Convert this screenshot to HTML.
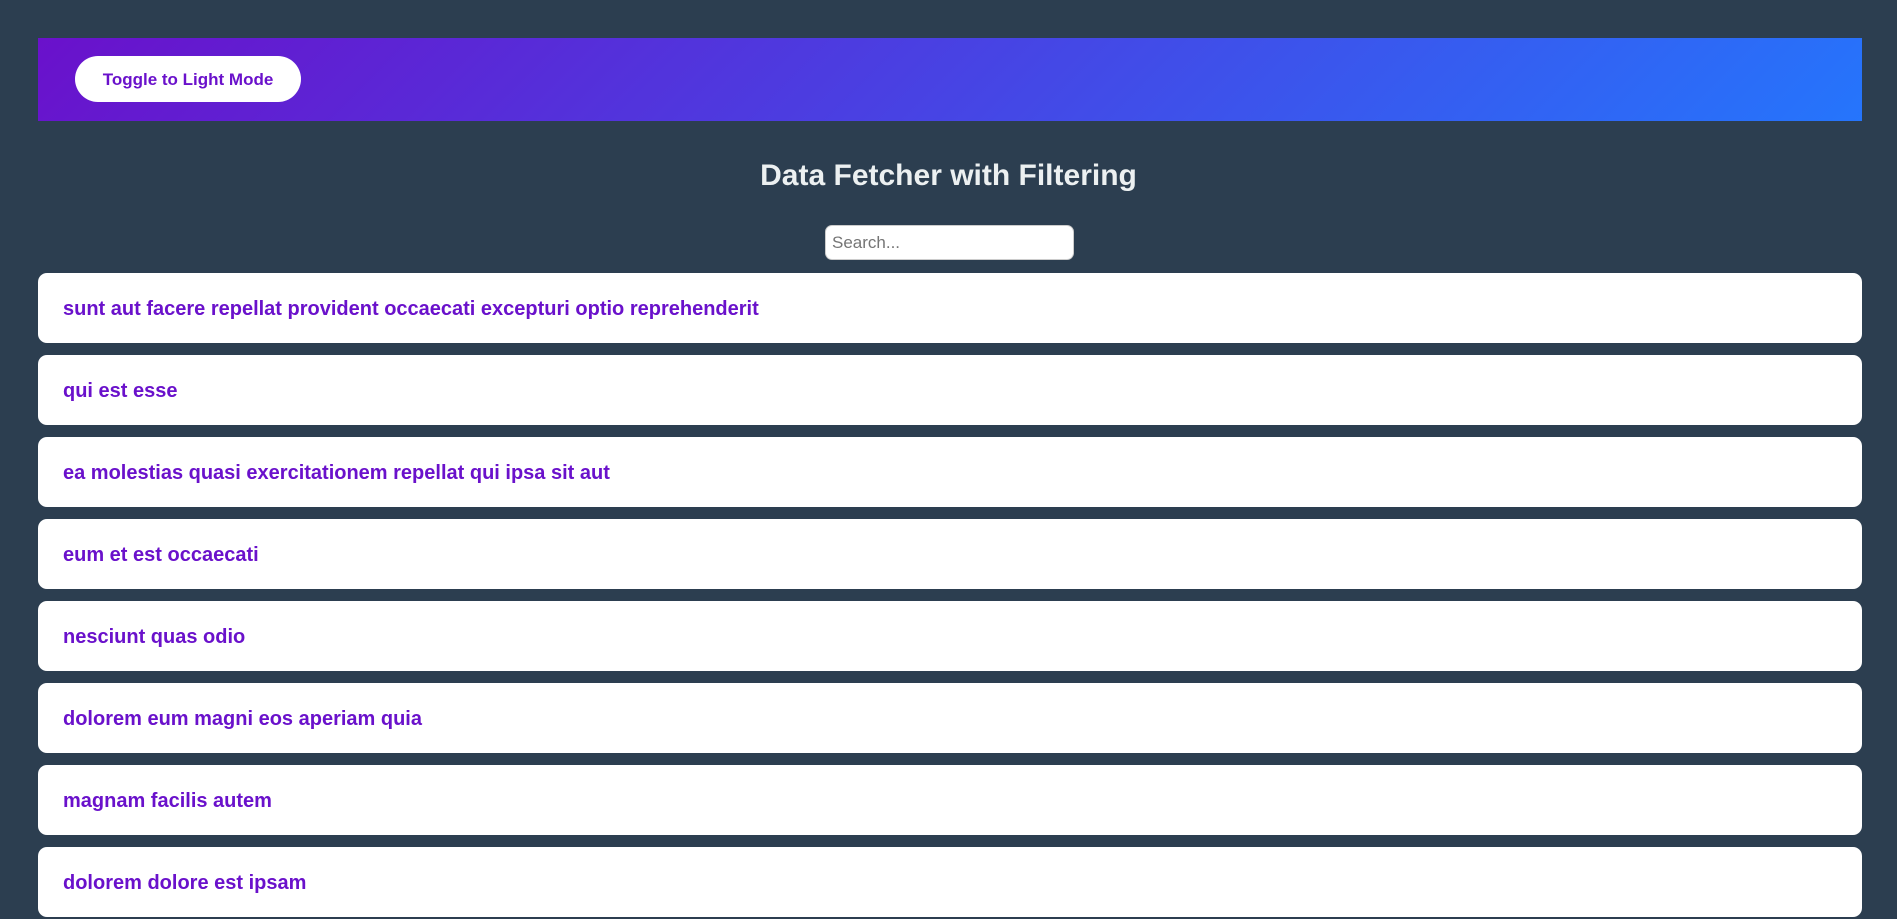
<!DOCTYPE html>
<html><head><style>
*{box-sizing:border-box}
body{margin:0;background:#2c3e50;font-family:"Liberation Sans",Arial,sans-serif;width:1897px;height:917px;overflow:hidden}
.hdr{position:absolute;left:38px;top:38px;width:1824px;height:83px;background:linear-gradient(135deg,#6a11cb,#2575fc)}
.btn{position:absolute;left:37px;top:18px;width:226px;height:46px;border-radius:23px;background:#fff;color:#6a11cb;font-weight:bold;font-size:17px;line-height:48px;text-align:center}
h1{position:absolute;top:158px;left:0;width:1897px;margin:0;text-align:center;color:#ecf0f1;font-size:30px;line-height:36px}
.search{position:absolute;left:825px;top:225px;width:249px;height:35px;background:#fff;border-radius:7px;border:1px solid #ccc;color:#757575;font-size:17px;line-height:33px;padding-left:6px}
.card{position:absolute;left:38px;width:1824px;height:70px;background:#fff;border-radius:9px;color:#6a11cb;font-weight:bold;font-size:20px;line-height:72px;padding-left:25px}
</style></head><body>
<div class="hdr"><div class="btn">Toggle to Light Mode</div></div>
<h1>Data Fetcher with Filtering</h1>
<div class="search">Search...</div>
<div class="card" style="top:273px">sunt aut facere repellat provident occaecati excepturi optio reprehenderit</div>
<div class="card" style="top:355px">qui est esse</div>
<div class="card" style="top:437px">ea molestias quasi exercitationem repellat qui ipsa sit aut</div>
<div class="card" style="top:519px">eum et est occaecati</div>
<div class="card" style="top:601px">nesciunt quas odio</div>
<div class="card" style="top:683px">dolorem eum magni eos aperiam quia</div>
<div class="card" style="top:765px">magnam facilis autem</div>
<div class="card" style="top:847px">dolorem dolore est ipsam</div>
</body></html>
